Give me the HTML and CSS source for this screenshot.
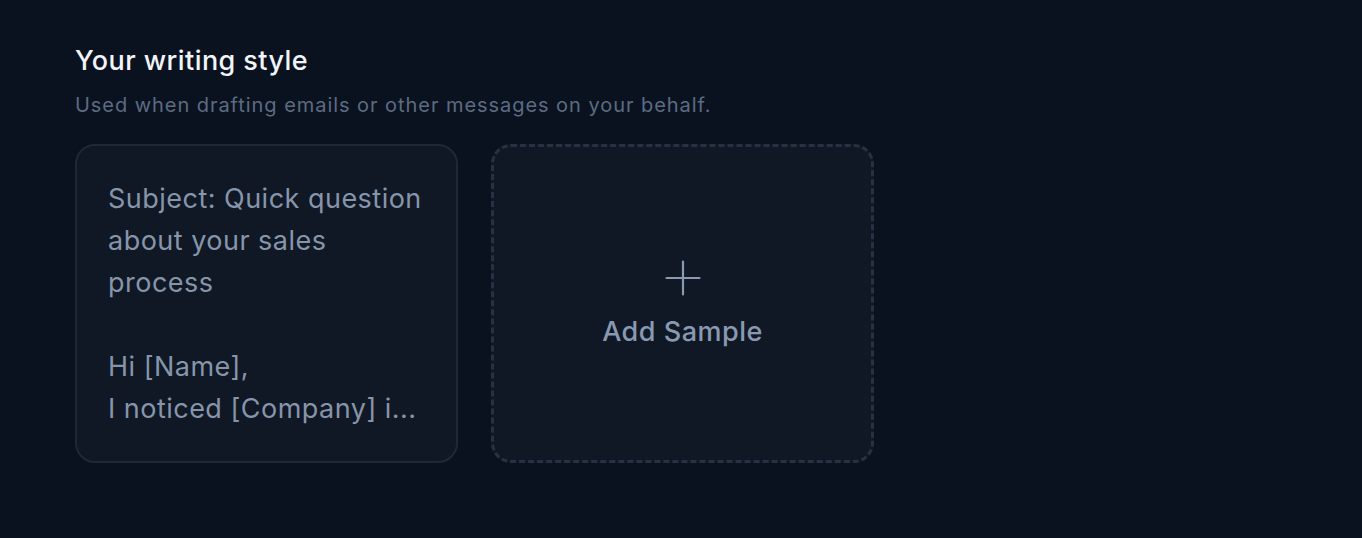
FILE: index.html
```html
<!DOCTYPE html>
<html lang="en">
<head>
<meta charset="utf-8">
<title>Your writing style</title>
<link rel="stylesheet" href="styles.css">
</head>
<body>
<section class="section">
  <h2 class="title">Your writing style</h2>
  <p class="subtitle">Used when drafting emails or other messages on your behalf.</p>
  <div class="samples">
    <div class="card sample">
      <p class="sample-text">Subject: Quick question about your sales process<br><br>Hi [Name],<br>I noticed [Company] i...</p>
    </div>
    <button class="card add" type="button">
      <svg class="plus" width="36" height="36" viewBox="0 0 36 36" fill="none" stroke="currentColor" stroke-width="2.2" stroke-linecap="round"><path d="M18 1.5v33M1.5 18h33"/></svg>
      <span class="add-label">Add Sample</span>
    </button>
  </div>
</section>
</body>
</html>
```
FILE: styles.css
```css
html, body {
  margin: 0;
  padding: 0;
  background: #0a1220;
  height: 100%;
}
body {
  font-family: Inter, "Noto Sans", sans-serif;
}
.section {
  padding: 45px 0 0 75px;
}
.title {
  margin: 0;
  font-size: 27px;
  line-height: 32px;
  font-weight: 500;
  letter-spacing: 0.43px;
  color: #f1f5f9;
}
.subtitle {
  margin: 14px 0 0;
  font-size: 20px;
  line-height: 28px;
  letter-spacing: 0.95px;
  color: #5d6b81;
}
.samples {
  display: flex;
  gap: 33px;
  margin-top: 25px;
}
.card {
  box-sizing: border-box;
  width: 383px;
  height: 319px;
  border-radius: 20px;
  background: #0f1824;
}
.sample {
  border: 2px solid #1e2836;
  padding: 32px 31px 0;
  overflow: hidden;
}
.sample-text {
  margin: 0;
  font-size: 27px;
  line-height: 42px;
  letter-spacing: 0.48px;
  color: #8795ab;
}
.add {
  border: 3px dashed #263243;
  display: flex;
  flex-direction: column;
  align-items: center;
  justify-content: center;
  gap: 20px;
  color: #8a99b2;
  font-family: inherit;
  cursor: pointer;
  padding: 0 0 0;
}
.plus {
  display: block;
}
.add-label {
  font-size: 27px;
  line-height: 32px;
  font-weight: 500;
  letter-spacing: 0.5px;
}
```
